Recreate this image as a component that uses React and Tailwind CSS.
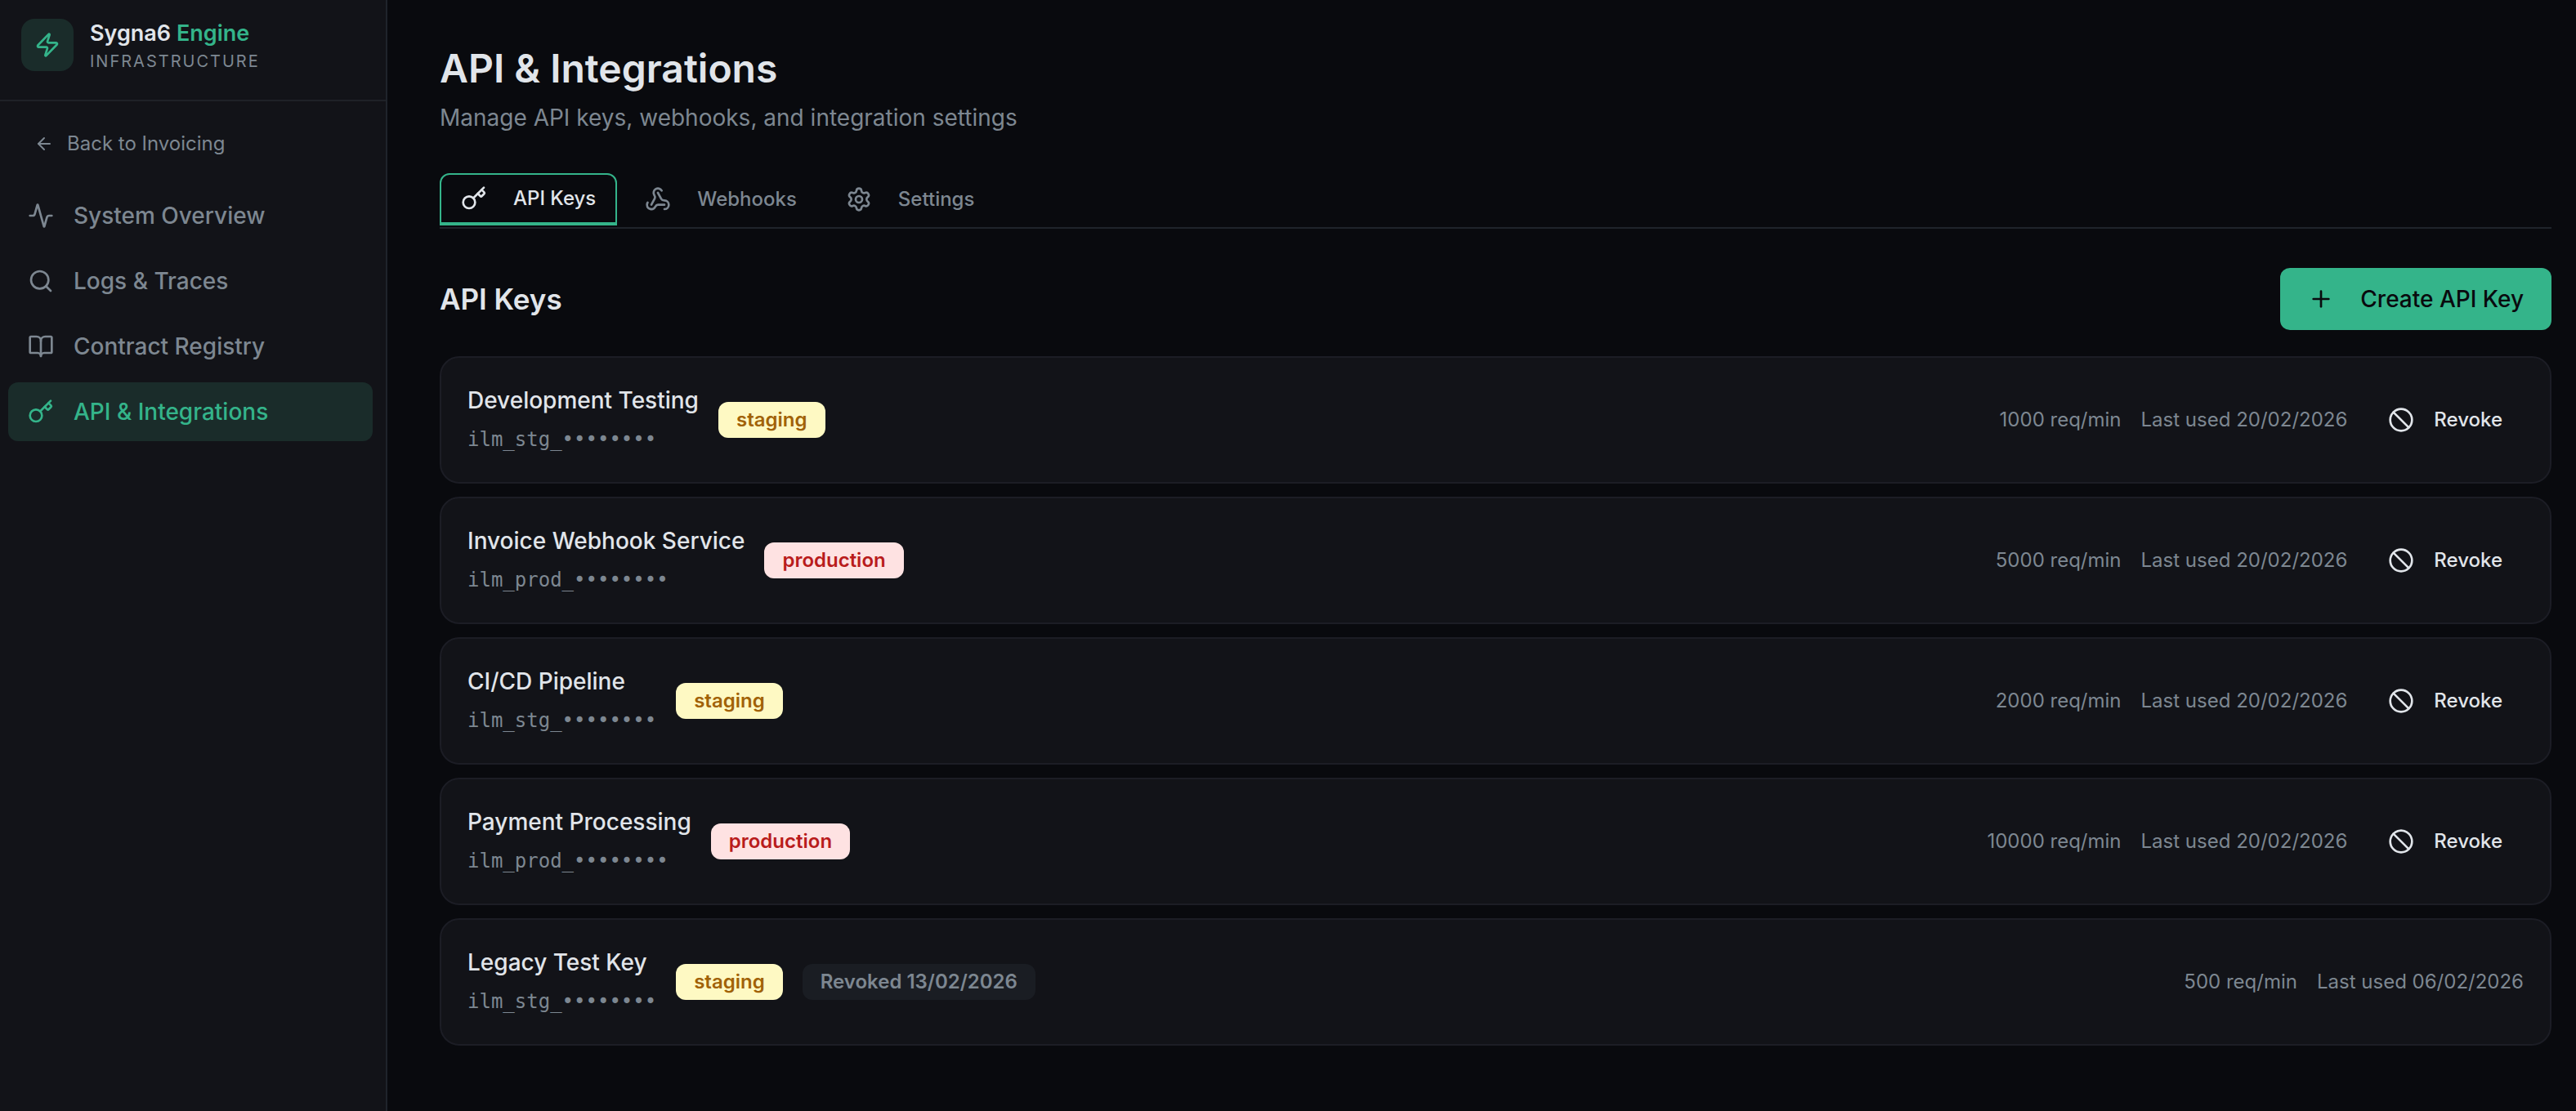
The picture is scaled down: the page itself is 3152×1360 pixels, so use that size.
import { useState } from "react";
import {
  Activity,
  ArrowLeft,
  Ban,
  BookOpen,
  Key,
  Plus,
  Search,
  Settings,
  Webhook,
  Zap,
} from "lucide-react";

const navItems = [
  { label: "System Overview", href: "#overview", icon: Activity },
  { label: "Logs & Traces", href: "#logs", icon: Search },
  { label: "Contract Registry", href: "#contracts", icon: BookOpen },
  { label: "API & Integrations", href: "#api", icon: Key, active: true },
];

const tabs = [
  { id: "keys", label: "API Keys", icon: Key },
  { id: "webhooks", label: "Webhooks", icon: Webhook },
  { id: "settings", label: "Settings", icon: Settings },
];

const apiKeys = [
  {
    name: "Development Testing",
    prefix: "ilm_stg_",
    env: "staging",
    limit: 1000,
    lastUsed: "20/02/2026",
  },
  {
    name: "Invoice Webhook Service",
    prefix: "ilm_prod_",
    env: "production",
    limit: 5000,
    lastUsed: "20/02/2026",
  },
  {
    name: "CI/CD Pipeline",
    prefix: "ilm_stg_",
    env: "staging",
    limit: 2000,
    lastUsed: "20/02/2026",
  },
  {
    name: "Payment Processing",
    prefix: "ilm_prod_",
    env: "production",
    limit: 10000,
    lastUsed: "20/02/2026",
  },
  {
    name: "Legacy Test Key",
    prefix: "ilm_stg_",
    env: "staging",
    limit: 500,
    lastUsed: "06/02/2026",
    revoked: "13/02/2026",
  },
];

const envStyles = {
  staging: "bg-[#fef9c3] text-[#a16207]",
  production: "bg-[#fee2e2] text-[#b91c1c]",
};

const Sidebar = () => (
  <aside className="w-[474px] shrink-0 bg-[#121318] border-r-2 border-[#1f242b]">
    <div className="flex items-start gap-5 px-[26px] pt-[23px] pb-[31px] border-b-2 border-[#1f2127]">
      <div className="flex items-center justify-center size-16 rounded-2xl bg-[#1a2c2a]">
        <Zap className="size-8 text-[#34b48a]" />
      </div>
      <div>
        <p className="text-[27px] leading-9 font-semibold text-[#e1e5ea]">
          Sygna6 <span className="text-[#34b48a]">Engine</span>
        </p>
        <p className="text-[20px] leading-8 tracking-widest uppercase text-[#7d8791]">
          Infrastructure
        </p>
      </div>
    </div>

    <nav className="pl-[10px] pr-4 pt-6">
      <a
        href="#invoicing"
        className="flex items-center gap-4 h-14 px-8 mb-6 text-[24px] text-[#7d8791]"
      >
        <ArrowLeft className="size-6" />
        Back to Invoicing
      </a>
      <ul className="space-y-2">
        {navItems.map(({ label, href, icon: Icon, active }) => (
          <li key={label}>
            <a
              href={href}
              className={`flex items-center gap-6 h-[72px] px-6 rounded-xl text-[28px] font-medium ${
                active ? "bg-[#1a2c2a] text-[#34b48a]" : "text-[#7d8791]"
              }`}
            >
              <Icon className="size-8" />
              {label}
            </a>
          </li>
        ))}
      </ul>
    </nav>
  </aside>
);

const Badge = ({ className, children }) => (
  <span
    className={`flex items-center h-11 px-[22px] rounded-xl text-[24px] font-semibold ${className}`}
  >
    {children}
  </span>
);

const KeyCard = ({ item }) => (
  <li className="flex items-center justify-between p-8 rounded-3xl border-2 border-[#1c1d25] bg-[#121318]">
    <div className="flex items-center gap-6">
      <div>
        <h3 className="text-[28px] leading-10 font-medium text-[#e1e5ea]">
          {item.name}
        </h3>
        <code className="block mt-2 text-[24px] leading-10 font-['DejaVu_Sans_Mono',monospace] text-[#7d8791]">
          {item.prefix}••••••••
        </code>
      </div>
      <Badge className={envStyles[item.env]}>{item.env}</Badge>
      {item.revoked && (
        <Badge className="bg-[#1a1d23] text-[#7d8791]">
          Revoked {item.revoked}
        </Badge>
      )}
    </div>
    <div className="flex items-center gap-6 text-[24px] text-[#7d8791]">
      <span>{item.limit} req/min</span>
      <span>Last used {item.lastUsed}</span>
      {!item.revoked && (
        <button
          type="button"
          className="flex items-center gap-6 h-16 px-[26px] font-medium text-[#e1e5ea] cursor-pointer"
        >
          <Ban className="size-8" />
          Revoke
        </button>
      )}
    </div>
  </li>
);

const App = () => {
  const [activeTab, setActiveTab] = useState("keys");

  return (
    <div className="flex min-h-screen bg-[#090a0e] font-['Inter',sans-serif]">
      <Sidebar />

      <main className="flex-1 pl-16 pr-[30px] pt-[52px]">
        <h1 className="text-[48px] leading-16 font-semibold text-[#e1e5ea]">
          API & Integrations
        </h1>
        <p className="mt-2 text-[28px] leading-10 text-[#7d8791]">
          Manage API keys, webhooks, and integration settings
        </p>

        {/* Tabs */}
        <div
          role="tablist"
          className="flex gap-2 mt-12 pb-[2px] border-b-2 border-[#1f242b]"
        >
          {tabs.map(({ id, label, icon: Icon }) => (
            <button
              key={id}
              type="button"
              role="tab"
              aria-selected={activeTab === id}
              onClick={() => setActiveTab(id)}
              className={`flex items-center gap-8 h-16 px-6 rounded-t-xl border-2 text-[24px] font-medium cursor-pointer ${
                activeTab === id
                  ? "border-b-4 border-[#34b48a] text-[#e1e5ea]"
                  : "border-transparent text-[#7d8791]"
              }`}
            >
              <Icon className="size-8" />
              {label}
            </button>
          ))}
        </div>

        {/* Key list */}
        <div className="flex items-center justify-between mt-12">
          <h2 className="text-[35px] font-semibold text-[#e1e5ea]">API Keys</h2>
          <button
            type="button"
            className="flex items-center gap-8 h-[76px] px-[34px] rounded-xl bg-[#34b48a] text-[28px] font-medium text-[#090a0e] cursor-pointer"
          >
            <Plus className="size-8" />
            Create API Key
          </button>
        </div>
        <ul className="mt-8 space-y-4">
          {apiKeys.map((item) => (
            <KeyCard key={item.name} item={item} />
          ))}
        </ul>
      </main>
    </div>
  );
};

export default App;
